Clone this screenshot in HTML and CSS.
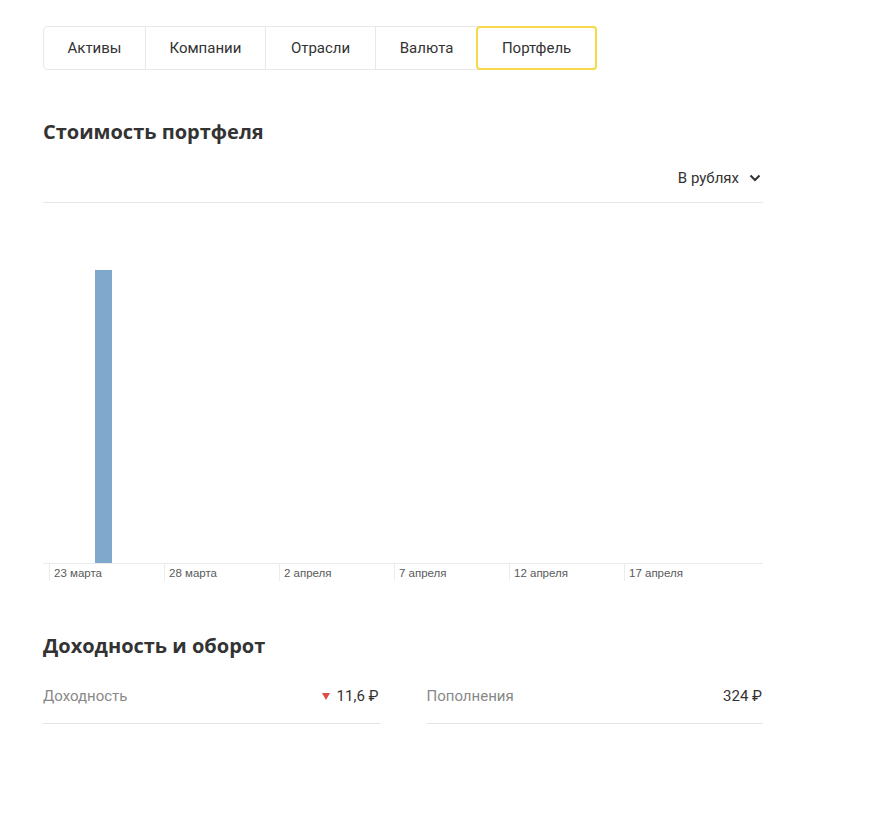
FILE: index.html
```html
<!DOCTYPE html>
<html lang="ru">
<head>
    <meta charset="UTF-8">
    <meta name="viewport" content="width=device-width, initial-scale=1.0">
    <title>Портфель</title>
    <link rel="stylesheet" href="styles.css">
</head>
<body>
    <div class="page">
        <nav class="tabs">
            <div class="tab">Активы</div>
            <div class="tab">Компании</div>
            <div class="tab">Отрасли</div>
            <div class="tab">Валюта</div>
            <div class="tab active">Портфель</div>
        </nav>

        <h2 class="title">Стоимость портфеля</h2>
        <div class="chart-head">
            <div class="currency">В рублях
                <svg width="12" height="8" viewBox="0 0 12 8"><path d="M1.5 1.5 6 6l4.5-4.5" fill="none" stroke="#333" stroke-width="2"/></svg>
            </div>
        </div>

        <div class="chart">
            <div class="plot">
                <div class="bar" style="height: 293px"></div>
            </div>
            <div class="axis">
                <span>23 марта</span>
                <span>28 марта</span>
                <span>2 апреля</span>
                <span>7 апреля</span>
                <span>12 апреля</span>
                <span>17 апреля</span>
            </div>
        </div>

        <h2 class="title title-second">Доходность и оборот</h2>
        <div class="stats">
            <div class="stat">
                <span class="label">Доходность</span>
                <span class="value"><i class="down"></i>11,6 ₽</span>
            </div>
            <div class="stat">
                <span class="label">Пополнения</span>
                <span class="value">324 ₽</span>
            </div>
        </div>
    </div>
</body>
</html>
```

FILE: styles.css
```css
body {
    margin: 0;
    padding: 0;
    background: #fff;
    color: #333;
    font-family: Roboto, "Liberation Sans", sans-serif;
}

.page {
    width: 720px;
    padding: 26px 0 0 43px;
}

.tabs {
    display: inline-flex;
    border: 1px solid #e8e8e8;
    border-radius: 4px;
    font-size: 15px;
    color: #333;
}

.tab {
    padding: 0 23.5px;
    line-height: 42px;
    border-left: 1px solid #e8e8e8;
}

.tab:first-child {
    border-left: 0;
}

.tab:nth-child(3) {
    padding: 0 25px;
}

.tab.active {
    margin: -1px;
    padding: 0 24px;
    border: 2px solid #f7d84a;
    border-radius: 4px;
    line-height: 40px;
}

.title {
    margin: 48px 0 0;
    font-family: "Open Sans", sans-serif;
    font-size: 20px;
    font-weight: 700;
    line-height: 28px;
    color: #333;
}

.chart-head {
    display: flex;
    justify-content: flex-end;
    padding: 23px 0 15px;
    border-bottom: 1px solid #e8e8e8;
}

.currency {
    display: flex;
    align-items: center;
    gap: 10px;
    padding-right: 2px;
    font-size: 15px;
    line-height: 18px;
}

.plot {
    display: flex;
    align-items: flex-end;
    height: 360px;
    padding-left: 52px;
    border-bottom: 1px solid #ececec;
}

.bar {
    width: 17px;
    background: #80a8cc;
}

.axis {
    display: flex;
    padding-left: 6px;
    font-family: "Liberation Sans", Arial, sans-serif;
    font-size: 11.5px;
    color: #5a5a5a;
}

.axis span {
    width: 110px;
    padding: 2px 0 0 4px;
    line-height: 15px;
    border-left: 1px solid #ececec;
}

.title-second {
    margin-top: 51px;
}

.stats {
    display: flex;
    gap: 47px;
    margin-top: 26px;
}

.stat {
    flex: 1;
    display: flex;
    justify-content: space-between;
    align-items: center;
    padding-bottom: 17px;
    border-bottom: 1px solid #e4e4e4;
    font-size: 15px;
    line-height: 20px;
}

.label {
    color: #888;
}

.value {
    display: flex;
    align-items: center;
    padding-right: 1px;
    color: #333;
}

.down {
    width: 0;
    height: 0;
    margin-right: 7px;
    border-left: 4px solid transparent;
    border-right: 4px solid transparent;
    border-top: 7px solid #dd4b4b;
}
```
